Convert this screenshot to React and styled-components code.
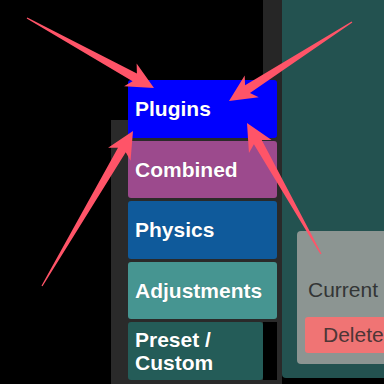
import React from 'react'
import styled, { createGlobalStyle } from 'styled-components'

const GlobalStyle = createGlobalStyle`
  html, body {
    margin: 0;
    padding: 0;
    background: #000;
  }
  body {
    font-family: "Liberation Sans", Arial, sans-serif;
  }
`

const Screen = styled.div`
  position: relative;
  width: 384px;
  height: 384px;
  display: flex;
  background: #000;
  overflow: hidden;
`

const LeftArea = styled.div`
  width: 282px;
  flex: none;
  display: flex;
  flex-direction: column;
`

const TopStrip = styled.div`
  height: 120px;
  flex: none;
  display: flex;
  justify-content: flex-end;
`

const GrayStrip = styled.div`
  width: 19px;
  background: #262626;
`

const SidePanel = styled.div`
  flex: 1;
  margin-left: 111px;
  background: #2a2a2a;
  padding: 0 5px 0 17px;
`

const TabList = styled.div`
  margin-top: -40px;
  display: flex;
  flex-direction: column;
  gap: 3px;
`

const TabRow = styled.div`
  display: flex;
  height: 57.5px;
`

const Tab = styled.div`
  flex: 1;
  display: flex;
  align-items: center;
  padding: 0 7px;
  border-radius: 3px;
  background: ${({ $color }) => $color};
  color: #fff;
  font-weight: bold;
  font-size: 21px;
  line-height: 23px;
  text-shadow: 0 0 1px rgba(0, 0, 0, 0.25);
`

const ScrollGap = styled.div`
  width: 14px;
  background: #000;
`

const MainPanel = styled.div`
  flex: 1;
  height: 378px;
  background: #235250;
  border-radius: 0 0 0 4px;
  display: flex;
  flex-direction: column;
  justify-content: flex-end;
  padding: 0 0 14px 15px;
  box-sizing: border-box;
`

const Card = styled.div`
  width: 130px;
  height: 133px;
  background: #8c9592;
  border-radius: 4px 0 0 4px;
  display: flex;
  flex-direction: column;
  justify-content: flex-end;
  padding: 0 0 11px 8px;
  box-sizing: border-box;
`

const Label = styled.div`
  font-size: 21px;
  line-height: 24px;
  color: #333636;
  margin: 0 0 15px 3px;
  white-space: nowrap;
`

const DeleteButton = styled.div`
  height: 36px;
  display: flex;
  align-items: center;
  padding-left: 18px;
  background: #f07474;
  border-radius: 3px;
  font-size: 21px;
  color: #4e3636;
  white-space: nowrap;
`

const Overlay = styled.svg`
  position: absolute;
  left: 0;
  top: 0;
  pointer-events: none;
`

const tabs = [
  { label: 'Plugins', color: '#0000ff' },
  { label: 'Combined', color: '#9c4a8d' },
  { label: 'Physics', color: '#0f5a9b' },
  { label: 'Adjustments', color: '#469591' },
]

const arrows = [
  [27, 18, 154, 88],
  [352, 22, 229, 101],
  [42, 286, 133, 131],
  [321, 254, 247, 123],
]

// tapered "callout" arrow, tail thin, notched head
function arrowPoints([x0, y0, x1, y1]) {
  const len = Math.hypot(x1 - x0, y1 - y0)
  const dx = (x1 - x0) / len
  const dy = (y1 - y0) / len
  const px = -dy
  const py = dx
  const at = (t, w) => [x1 - dx * t + px * w, y1 - dy * t + py * w]
  const pts = [
    [x0 + px * 0.6, y0 + py * 0.6],
    at(22, 4.5),
    at(27, 13),
    [x1, y1],
    at(27, -13),
    at(22, -4.5),
    [x0 - px * 0.6, y0 - py * 0.6],
  ]
  return pts.map((p) => p.join(',')).join(' ')
}

const App = () => {
  return (
    <Screen>
      <GlobalStyle />
      <LeftArea>
        <TopStrip>
          <GrayStrip />
        </TopStrip>
        <SidePanel>
          <TabList>
            {tabs.map((t) => (
              <TabRow key={t.label}>
                <Tab $color={t.color}>{t.label}</Tab>
              </TabRow>
            ))}
            <TabRow>
              <Tab $color="#245c58">
                Preset /
                <br />
                Custom
              </Tab>
              <ScrollGap />
            </TabRow>
          </TabList>
        </SidePanel>
      </LeftArea>
      <MainPanel>
        <Card>
          <Label>Current</Label>
          <DeleteButton>Delete</DeleteButton>
        </Card>
      </MainPanel>
      <Overlay width="384" height="384" viewBox="0 0 384 384">
        {arrows.map((a, i) => (
          <polygon key={i} points={arrowPoints(a)} fill="#ff5468" />
        ))}
      </Overlay>
    </Screen>
  )
}

export default App
